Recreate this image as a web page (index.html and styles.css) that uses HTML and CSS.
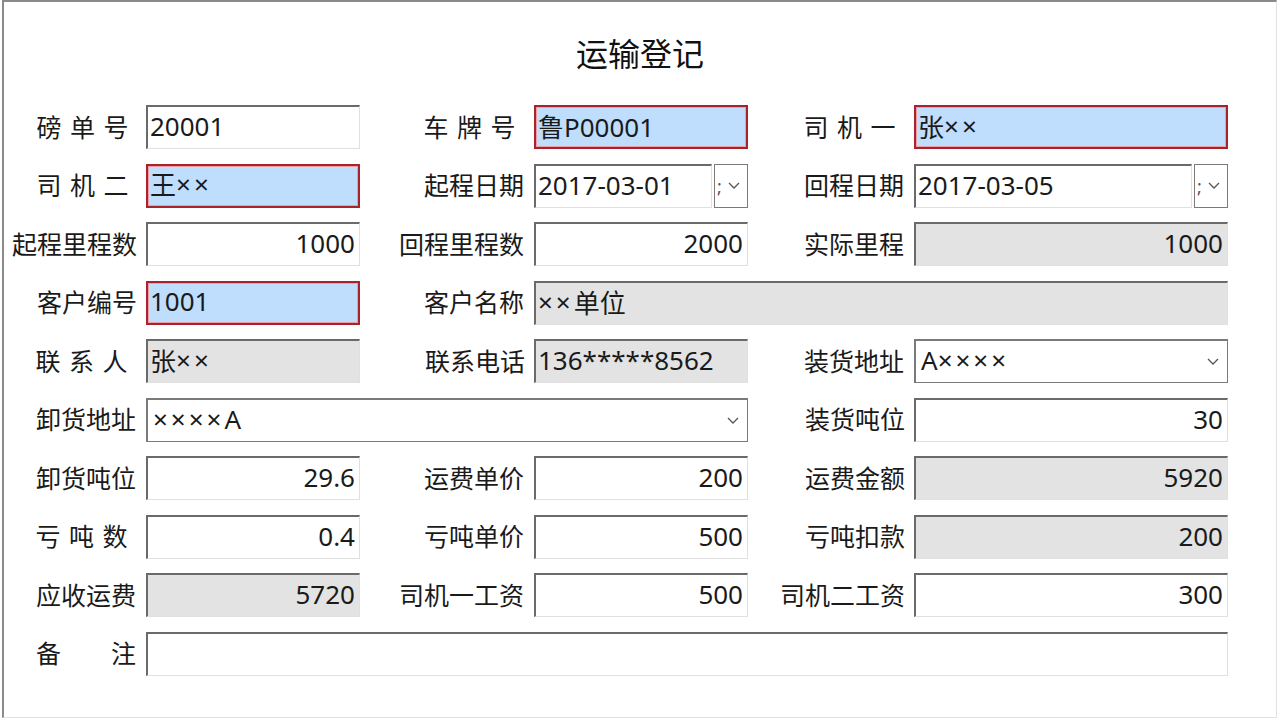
FILE: index.html
```html
<!DOCTYPE html>
<html lang="zh-CN">
<head>
<meta charset="utf-8">
<title>运输登记</title>
<link rel="stylesheet" href="styles.css">
</head>
<body>
<div class="window">
  <h1 class="title">运输登记</h1>
  <div class="form">
    <!-- row 1 -->
    <div class="lbl sp3">磅单号</div>
    <div class="field">20001</div>
    <div class="lbl sp3">车牌号</div>
    <div class="field hl">鲁P00001</div>
    <div class="lbl sp3">司机一</div>
    <div class="field hl">张<span class="x">××</span></div>
    <!-- row 2 -->
    <div class="lbl sp3">司机二</div>
    <div class="field hl">王<span class="x">××</span></div>
    <div class="lbl">起程日期</div>
    <div class="date">
      <div class="field">2017-03-01</div>
      <div class="dbtn"><span class="frag">;</span><svg class="chev" viewBox="0 0 12 7"><polyline points="1,1 6,6 11,1"/></svg></div>
    </div>
    <div class="lbl">回程日期</div>
    <div class="date">
      <div class="field">2017-03-05</div>
      <div class="dbtn"><span class="frag">;</span><svg class="chev" viewBox="0 0 12 7"><polyline points="1,1 6,6 11,1"/></svg></div>
    </div>
    <!-- row 3 -->
    <div class="lbl">起程里程数</div>
    <div class="field num">1000</div>
    <div class="lbl">回程里程数</div>
    <div class="field num">2000</div>
    <div class="lbl">实际里程</div>
    <div class="field num ro">1000</div>
    <!-- row 4 -->
    <div class="lbl">客户编号</div>
    <div class="field hl">1001</div>
    <div class="lbl">客户名称</div>
    <div class="field ro span3"><span class="x">××</span>单位</div>
    <!-- row 5 -->
    <div class="lbl sp3">联系人</div>
    <div class="field ro">张<span class="x">××</span></div>
    <div class="lbl">联系电话</div>
    <div class="field ro">136*****8562</div>
    <div class="lbl">装货地址</div>
    <div class="combo"><span>A<span class="x">××××</span></span><svg class="chev" viewBox="0 0 12 7"><polyline points="1,1 6,6 11,1"/></svg></div>
    <!-- row 6 -->
    <div class="lbl">卸货地址</div>
    <div class="combo span3"><span><span class="x">××××</span>A</span><svg class="chev" viewBox="0 0 12 7"><polyline points="1,1 6,6 11,1"/></svg></div>
    <div class="lbl">装货吨位</div>
    <div class="field num">30</div>
    <!-- row 7 -->
    <div class="lbl">卸货吨位</div>
    <div class="field num">29.6</div>
    <div class="lbl">运费单价</div>
    <div class="field num">200</div>
    <div class="lbl">运费金额</div>
    <div class="field num ro">5920</div>
    <!-- row 8 -->
    <div class="lbl sp3">亏吨数</div>
    <div class="field num">0.4</div>
    <div class="lbl">亏吨单价</div>
    <div class="field num">500</div>
    <div class="lbl">亏吨扣款</div>
    <div class="field num ro">200</div>
    <!-- row 9 -->
    <div class="lbl">应收运费</div>
    <div class="field num ro">5720</div>
    <div class="lbl">司机一工资</div>
    <div class="field num">500</div>
    <div class="lbl">司机二工资</div>
    <div class="field num">300</div>
    <!-- row 10 -->
    <div class="lbl"><span class="wide"><span>备</span><span>注</span></span></div>
    <div class="field span5"></div>
  </div>
</div>
</body>
</html>
```
FILE: styles.css
```css
* { box-sizing: border-box; }
html, body {
  margin: 0;
  padding: 0;
  background: #ffffff;
}
body {
  width: 1280px;
  height: 720px;
  overflow: hidden;
  font-family: "Noto Sans", "Noto Sans CJK SC", sans-serif;
  color: #1a1a1a;
}
.window {
  margin-left: 2px;
  width: 1275px;
  height: 718px;
  border-top: 2px solid #8a8a8a;
  border-left: 2px solid #8a8a8a;
  border-right: 1px solid #e2e2e2;
  border-bottom: 1px solid #e2e2e2;
  background: #ffffff;
}
.title {
  margin: 0;
  padding: 26px 0 29px;
  height: 103px;
  line-height: 48px;
  font-size: 32px;
  font-weight: normal;
  text-align: center;
  font-family: "Noto Sans CJK SC", sans-serif;
  color: #111;
}
.form {
  display: grid;
  padding-left: 4px;
  grid-template-columns: 138px 214px 174px 214px 166px 314px;
  grid-auto-rows: 44px;
  row-gap: 14.56px;
}
.lbl {
  display: flex;
  align-items: center;
  justify-content: flex-end;
  padding-right: 9px;
  padding-bottom: 3px;
  font-size: 25px;
  font-family: "Noto Sans CJK SC", sans-serif;
  white-space: nowrap;
  color: #1a1a1a;
}
.lbl.sp3 { letter-spacing: 8.5px; }
.wide {
  display: flex;
  justify-content: space-between;
  width: 100px;
}
.form > .lbl:nth-child(6n+3),
.form > .lbl:nth-child(6n+5) { padding-right: 10px; }
.field {
  display: flex;
  align-items: center;
  height: 44px;
  padding: 0 3px 3px 2px;
  font-size: 26px;
  white-space: nowrap;
  overflow: hidden;
  background: #ffffff;
  border-top: 2px solid #6a6a6a;
  border-left: 2px solid #6a6a6a;
  border-right: 1px solid #e0e0e0;
  border-bottom: 1px solid #e0e0e0;
}
.x { letter-spacing: 3px; }
.field.num { justify-content: flex-end; padding-right: 4px; }
.field.ro { background: #e3e3e3; }
.field.hl {
  background: #bfddfc;
  border: 2px solid #a8232c;
  box-shadow: inset 0 0 0 1px #e8a0a6;
}
.span3 { grid-column: span 3; }
.span5 { grid-column: span 5; }
.date {
  display: flex;
  gap: 2px;
}
.date .field { flex: 1; }
.dbtn {
  position: relative;
  width: 34px;
  height: 44px;
  border: 1px solid #7a7a7a;
  background: #ffffff;
  display: flex;
  align-items: center;
  justify-content: flex-end;
  padding-right: 7px;
}
.frag {
  position: absolute;
  left: 2px;
  top: 9px;
  font-size: 18px;
  color: #555;
}
.combo {
  display: flex;
  align-items: center;
  justify-content: space-between;
  height: 44px;
  padding: 0 8px 3px 5px;
  border: 2px solid #7a7a7a;
  border-right-width: 1px;
  border-bottom-width: 1px;
  background: #ffffff;
  font-size: 26px;
  white-space: nowrap;
}
.combo .chev { margin-top: 3px; }
.chev {
  width: 12px;
  height: 7px;
  flex: none;
}
.chev polyline {
  fill: none;
  stroke: #555;
  stroke-width: 1.3;
}
```
